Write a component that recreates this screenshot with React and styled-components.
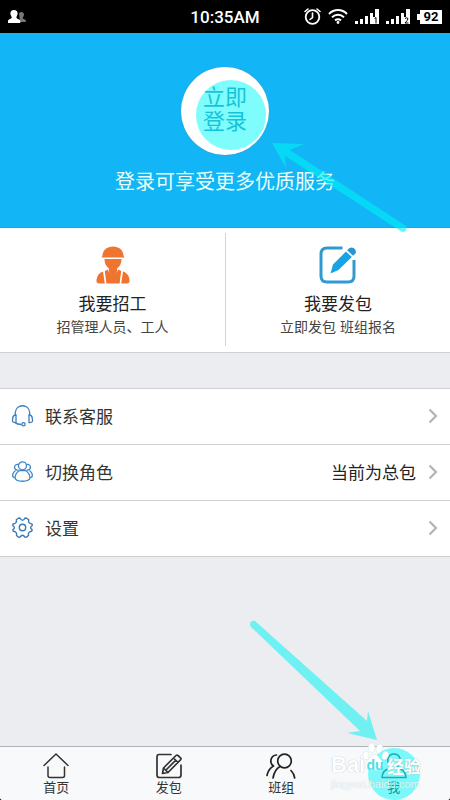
import React from "react";
import styled, { createGlobalStyle } from "styled-components";

const GlobalStyle = createGlobalStyle`
  * {
    box-sizing: border-box;
  }

  body {
    margin: 0;
    background: #000;
    font-family: "Liberation Sans", "Noto Sans CJK SC", sans-serif;
    color: #222;
  }

  button {
    border: 0;
    background: none;
    font: inherit;
    color: inherit;
    cursor: pointer;
  }

  svg {
    display: block;
    flex: none;
    overflow: visible;
  }
`;

const Screen = styled.div`
  display: flex;
  flex-direction: column;
  min-height: 100vh;
  background: #ecedf0;
  border-radius: 0 0 3px 3px;
`;

const StatusBar = styled.header`
  display: grid;
  grid-template-columns: 1fr auto 1fr;
  align-items: center;
  height: 33px;
  padding: 0 8px;
  background: #000;
  color: #fff;
`;

const Clock = styled.time`
  font-family: Roboto, sans-serif;
  font-size: 17px;
  font-weight: 500;
`;

const StatusIcons = styled.div`
  display: flex;
  justify-content: flex-end;
  align-items: center;
  gap: 7px;
`;

const Battery = styled.span`
  position: relative;
  width: 22px;
  height: 14px;
  margin-left: 3px;
  background: #fff;
  color: #000;
  font-family: Roboto, sans-serif;
  font-size: 13px;
  font-weight: 700;
  line-height: 14px;
  text-align: center;

  &::before {
    content: "";
    position: absolute;
    left: -3px;
    top: 4px;
    width: 3px;
    height: 6px;
    background: #fff;
  }
`;

const Hero = styled.section`
  position: relative;
  display: flex;
  flex-direction: column;
  align-items: center;
  gap: 14px;
  height: 195px;
  padding-top: 34px;
  background: #12b5f5;
  border-bottom: 1px solid #3d9cc8;
`;

const LoginButton = styled.button`
  position: relative;
  width: 88px;
  height: 88px;
  padding: 0 20px 2px;
  border-radius: 50%;
  background: #fff;
  box-shadow: 0 0 2px #4a9cc4;
  color: #2f8cbc;
  font-size: 22px;
  line-height: 24px;
`;

const HeroText = styled.p`
  margin: 0;
  color: #e8fffb;
  font-size: 20px;
  line-height: 26px;
`;

const Spot = styled.span`
  position: absolute;
  left: ${(p) => p.$left};
  top: ${(p) => p.$top};
  width: ${(p) => p.$size}px;
  height: ${(p) => p.$size}px;
  border-radius: 50%;
  background: rgba(0, 250, 250, 0.5);
  pointer-events: none;
`;

const HeroArrow = styled.svg`
  position: absolute;
  left: calc(50% + 46px);
  bottom: -6px;
  pointer-events: none;
`;

const TabArrow = styled.svg`
  position: absolute;
  right: 70px;
  bottom: 58px;
  pointer-events: none;
`;

const Cards = styled.section`
  display: grid;
  grid-template-columns: 1fr 1fr;
  padding: 5px 0 6px;
  background: #fff;
  border-bottom: 1px solid #d0d0d4;
`;

const CardButton = styled.button`
  display: flex;
  flex-direction: column;
  align-items: center;
  padding: 13px 8px 8px;

  & + & {
    border-left: 1px solid #d4d4d4;
  }
`;

const CardTitle = styled.span`
  margin-top: 9px;
  font-size: 17px;
  line-height: 24px;
`;

const CardNote = styled.span`
  color: #444;
  font-size: 14px;
  line-height: 21px;
`;

const Menu = styled.section`
  margin-top: 35px;
  border-top: 1px solid #cfcfd8;
`;

const MenuRow = styled.button`
  display: flex;
  align-items: center;
  width: 100%;
  height: 56px;
  padding: 0 12px 2px;
  gap: 12px;
  background: #fff;
  border-bottom: 1px solid #cfcfd2;
  color: #333;
  font-size: 17px;
  text-align: left;
`;

const RowLabel = styled.span`
  flex: 1;
`;

const RowValue = styled.span`
  color: #222;
`;

const TabBar = styled.nav`
  position: relative;
  display: grid;
  grid-template-columns: repeat(4, 1fr);
  height: 54px;
  margin-top: auto;
  background: #f7f9fa;
  border-top: 1px solid #b0b2b4;
  border-radius: 0 0 3px 3px;
`;

const Tab = styled.a`
  position: relative;
  display: flex;
  flex-direction: column;
  align-items: center;
  padding-top: 6px;
  color: #333;
  font-size: 13px;
  line-height: 18px;
  text-decoration: none;
`;

const Watermark = styled.div`
  position: absolute;
  right: 29px;
  bottom: 10px;
  width: 90px;
  color: #fff;
  text-shadow: 0 0 1px #aaa;
  white-space: nowrap;
  pointer-events: none;
`;

const WatermarkName = styled.div`
  display: flex;
  align-items: center;
  height: 26px;
  font-size: 22px;
  font-weight: 700;
`;

const WatermarkPaw = styled.span`
  position: relative;
  width: 20px;
  color: #45e0e4;
  font-size: 14px;
  text-align: center;
  text-shadow: none;

  svg {
    position: absolute;
    left: -2px;
    top: -16px;
  }
`;

const PawText = styled.span`
  position: relative;
`;

const WatermarkCjk = styled.span`
  margin-left: 2px;
  font-size: 17px;
`;

const WatermarkUrl = styled.div`
  font-size: 11px;
  line-height: 12px;
  opacity: 0.7;
`;

const ContactsIcon = () => (
  <svg width="18" height="13" viewBox="0 0 18 13">
    <path fill="#777" d="M11 3c2-2 5-1 5 1.500c0 2-1.500 2.500-1.200 4l3 1.500v2H12z" />
    <path
      fill="#fff"
      d="M6 0c2.400 0 3.800 1.500 3.600 3.800c-.1 1.700-1 2.400-1.200 3.700c.2 1.500 3.600 1.600 3.900 3.500v2H0v-2c.3-1.900 3.500-2 3.700-3.500c-.2-1.300-1.100-2-1.300-3.700C2.200 1.500 3.600 0 6 0z"
    />
  </svg>
);

const AlarmIcon = () => (
  <svg width="17" height="17" viewBox="0 0 17 17" fill="none" stroke="#fff" strokeLinecap="round">
    <circle cx="8.500" cy="9" r="6.800" strokeWidth="1.800" />
    <path strokeWidth="1.600" d="M8.500 5v4.500L6 11.500M1 3.500L4 1M16 3.500L13 1" />
  </svg>
);

const WifiIcon = () => (
  <svg width="20" height="15" viewBox="0 0 20 15" fill="none" stroke="#fff" strokeWidth="2">
    <path d="M1 5C6-.2 14-.2 19 5M4 8.300c3.500-3.300 8.500-3.300 12 0M7 11.400c2-1.600 4-1.600 6 0" />
    <circle cx="10" cy="13.500" r="1.400" fill="#fff" stroke="none" />
  </svg>
);

const SignalIcon = ({ sim }) => (
  <svg width="24" height="16" viewBox="0 0 24 16" fill="#fff">
    <path d="M0 12h3v3H0zM5 10h3v5H5zM10 7h3v8h-3zM15 4h3v11h-3zM20 0h4v15h-4z" />
    <path d="M18 8h6v7h-6z" />
    {sim === 1 ? (
      <path stroke="#000" fill="none" d="M19.500 9.500l1.500-1v6" />
    ) : (
      <path stroke="#000" fill="none" d="M19 9.500q2-1.500 3 0q0 1.500-3 4.500h3.500" />
    )}
  </svg>
);

const WorkerIcon = () => (
  <svg width="34" height="38" viewBox="0 0 34 38" fill="#ef7430">
    <path d="M6.500 9.500C6.800 5 9.500 2 13 1.200Q17 0 21 1.200C24.500 2 27.200 5 27.500 9.500l1 2h-23z" />
    <path d="M8.500 13h17c.2 4-1.600 7.300-4.500 9.500v2.500c.2 5-8.200 5-8 0v-2.500c-2.900-2.200-4.700-5.500-4.500-9.500z" />
    <path d="M7 25.500l1.800 12H4C1 37.500.2 36.500.6 33.500C1.200 29.500 3 27 7 25.500z" />
    <path d="M27 25.500l-1.800 12H30c3 0 3.800-1 3.400-4C32.800 29.500 31 27 27 25.500z" />
    <path d="M8.800 25l3.200-1.500c.7 6 9.300 6 10 0l3.200 1.500L23.600 37.500H10.400z" />
  </svg>
);

const PublishIcon = () => (
  <svg width="38" height="38" viewBox="0 0 38 38">
    <path
      fill="none"
      stroke="#3299cf"
      strokeWidth="3"
      d="M23.500 2H8Q2 2 2 8v22q0 6 6 6h21q6 0 6-6V14"
    />
    <path fill="#16a4e4" d="M11.500 27.500l2.500-9L27 5.500l5.800 5.500L19.500 24z" />
    <path fill="#2497d0" d="M28.200 4.200l2-2c3.500-2.500 8.500 2 6 5.600l-2.200 2z" />
  </svg>
);

const HeadsetIcon = () => (
  <svg width="21" height="21" viewBox="0 0 21 21" fill="none" stroke="#3a7fbd" strokeWidth="1.300">
    <path d="M3.300 10V7.500C4-1.500 17-1.500 17.700 7.500V10" />
    <path d="M4 10v7.500C0 18 0 16 .8 13Q1 10 4 10zM17 10v7.500c4 .5 4-1.500 3.200-4.500Q20 10 17 10z" />
    <path d="M3 17.500q2 2 6.500 2" />
    <circle cx="11.500" cy="19.300" r="1.600" />
  </svg>
);

const RolesIcon = () => (
  <svg width="21" height="21" viewBox="0 0 21 21" fill="none" stroke="#3d87c4" strokeWidth="1.300">
    <circle cx="10.500" cy="4.800" r="4" />
    <path d="M6.500 3.500C3 2.800 1.500 6 3.300 8.200Q4.500 9.500 6.500 9M14.500 3.500c3.500-.7 5 2.500 3.200 4.700Q16.500 9.500 14.500 9" />
    <path d="M7.500 9.500h6q4 2.500 4.500 7c-.5 5-14.500 5-15 0q.5-4.500 4.500-7z" />
    <path d="M3.500 9.500Q0 12.500.8 15.500l2 1.500M17.500 9.500q3.500 3 2.700 6l-2 1.500" />
  </svg>
);

const SettingsIcon = () => (
  <svg width="21" height="21" viewBox="0 0 21 21" fill="none" stroke="#3a7ab5" strokeWidth="1.400">
    <path
      strokeLinejoin="round"
      d="M6.300 1.200L8 1q1 2.300 2.500 2.300T13 1l1.700.2l2 1.500q-.9 3.800 3.300 4.300l.3 1.500q-3.300 2-.1 4.300l-.5 1.500q-4.100.5-3.200 4.200l-2 1.600l-1.500.1q-2.500-4-5 0l-1.500-.1l-2-1.600q.9-3.700-3.200-4.200l-.5-1.500q3.200-2.300-.1-4.300L1 7q4.200-.5 3.300-4.300z"
    />
    <circle cx="10.500" cy="10.500" r="3.200" />
  </svg>
);

const Chevron = () => (
  <svg width="10" height="16" viewBox="0 0 10 16" fill="none" stroke="#b4b4b4" strokeWidth="2.200">
    <path d="M1.500 1.500L8 8l-6.500 6.500" />
  </svg>
);

const HomeIcon = () => (
  <svg width="26" height="26" viewBox="0 0 26 26" fill="none" stroke="#333" strokeWidth="1.500" strokeLinecap="round">
    <path d="M1 12.500L13 1l12 11.500M5 14v8.500q0 2 2 2h12.500q2 0 2-2V14" />
  </svg>
);

const EditIcon = () => (
  <svg width="26" height="26" viewBox="0 0 26 26" fill="none" stroke="#333" strokeWidth="1.700" strokeLinejoin="round">
    <path strokeLinecap="round" d="M15 1.500H3Q1 1.500 1 4v18q0 2.500 2.500 2.500h19q2.500 0 2.500-2.500V12" />
    <path d="M6.500 20.500l1-5.500L20 2.500q1-1 2 0l2.500 2.300q1 1 0 2L12 19.500zM17.500 5l4.500 4.500M7.500 15l4.500 4.500M10 17L20 7" />
  </svg>
);

const TeamIcon = () => (
  <svg width="30" height="26" viewBox="0 0 30 26" fill="none" stroke="#222" strokeWidth="1.700" strokeLinecap="round">
    <circle cx="18.500" cy="8" r="6.800" />
    <path d="M10.500 2C4.500 2.500 3 10 7.500 13M7.500 13Q2.500 15.500 1 22.500M14 13.500Q8.500 16.500 7 25M25 17.500q3 3 3.700 7.500" />
  </svg>
);

const MeIcon = () => (
  <svg width="26" height="26" viewBox="0 0 26 26" fill="none" stroke="#31606a" strokeWidth="1.500" strokeLinejoin="round">
    <path d="M9.500 13C4.500 8 7 1 13 1s8.500 7 3.500 12q0 2 3 3q5 2 5.500 8.500H1Q1.500 18 6.500 16q3-1 3-3z" />
  </svg>
);

const Paw = () => (
  <svg width="24" height="34" viewBox="0 0 28 36" fill="#fff" stroke="#cfe6e6" strokeWidth="0.600">
    <ellipse cx="3.500" cy="15" rx="3.500" ry="5" />
    <ellipse cx="10" cy="6" rx="3.800" ry="5.500" />
    <ellipse cx="19" cy="7" rx="3.600" ry="5.500" transform="rotate(14 19 7)" />
    <ellipse cx="26" cy="15" rx="3.500" ry="5" transform="rotate(20 26 15)" />
    <path d="M13.500 14c4 0 5 4 8 7c4 4 3 11-2.500 11H8C2.500 32 1.500 25 5.500 21c3-3 4-7 8-7z" />
  </svg>
);

const menuItems = [
  { label: "联系客服", Icon: HeadsetIcon },
  { label: "切换角色", Icon: RolesIcon, value: "当前为总包" },
  { label: "设置", Icon: SettingsIcon },
];

const App = () => {
  return (
    <Screen>
      <GlobalStyle />
      <StatusBar>
        <ContactsIcon />
        <Clock>10:35AM</Clock>
        <StatusIcons>
          <AlarmIcon />
          <WifiIcon />
          <SignalIcon sim={1} />
          <SignalIcon sim={2} />
          <Battery>92</Battery>
        </StatusIcons>
      </StatusBar>

      <Hero>
        <LoginButton>
          立即登录
          <Spot $left="15px" $top="13px" $size={70} />
        </LoginButton>
        <HeroText>登录可享受更多优质服务</HeroText>
        <HeroArrow width="136" height="91" viewBox="0 0 136 91" fill="#00f0f5" opacity="0.6">
          <path d="M1 1l32 1l-14 6L135 84q2 6-4 6L14 14l1 12z" />
        </HeroArrow>
      </Hero>

      <Cards>
        <CardButton>
          <WorkerIcon />
          <CardTitle>我要招工</CardTitle>
          <CardNote>招管理人员、工人</CardNote>
        </CardButton>
        <CardButton>
          <PublishIcon />
          <CardTitle>我要发包</CardTitle>
          <CardNote>立即发包 班组报名</CardNote>
        </CardButton>
      </Cards>

      <Menu>
        {menuItems.map(({ label, Icon, value }) => (
          <MenuRow key={label}>
            <Icon />
            <RowLabel>{label}</RowLabel>
            {value && <RowValue>{value}</RowValue>}
            <Chevron />
          </MenuRow>
        ))}
      </Menu>

      <TabBar>
        <Tab href="#home">
          <HomeIcon />
          首页
        </Tab>
        <Tab href="#publish">
          <EditIcon />
          发包
        </Tab>
        <Tab href="#team">
          <TeamIcon />
          班组
        </Tab>
        <Tab href="#me">
          <MeIcon />
          我
          <Spot $left="calc(50% - 26px)" $top="1px" $size={52} />
        </Tab>
        <TabArrow width="131" height="122" viewBox="0 0 131 122" fill="#6ff0f2">
          <path d="M1 5Q1 0 6 1L118 101l1-10l9 29l-30-7l13-2L2 7z" />
        </TabArrow>
        <Watermark>
          <WatermarkName>
            Bai
            <WatermarkPaw>
              <Paw />
              <PawText>du</PawText>
            </WatermarkPaw>
            <WatermarkCjk>经验</WatermarkCjk>
          </WatermarkName>
          <WatermarkUrl>jingyan.baidu.com</WatermarkUrl>
        </Watermark>
      </TabBar>
    </Screen>
  );
};
export default App;
